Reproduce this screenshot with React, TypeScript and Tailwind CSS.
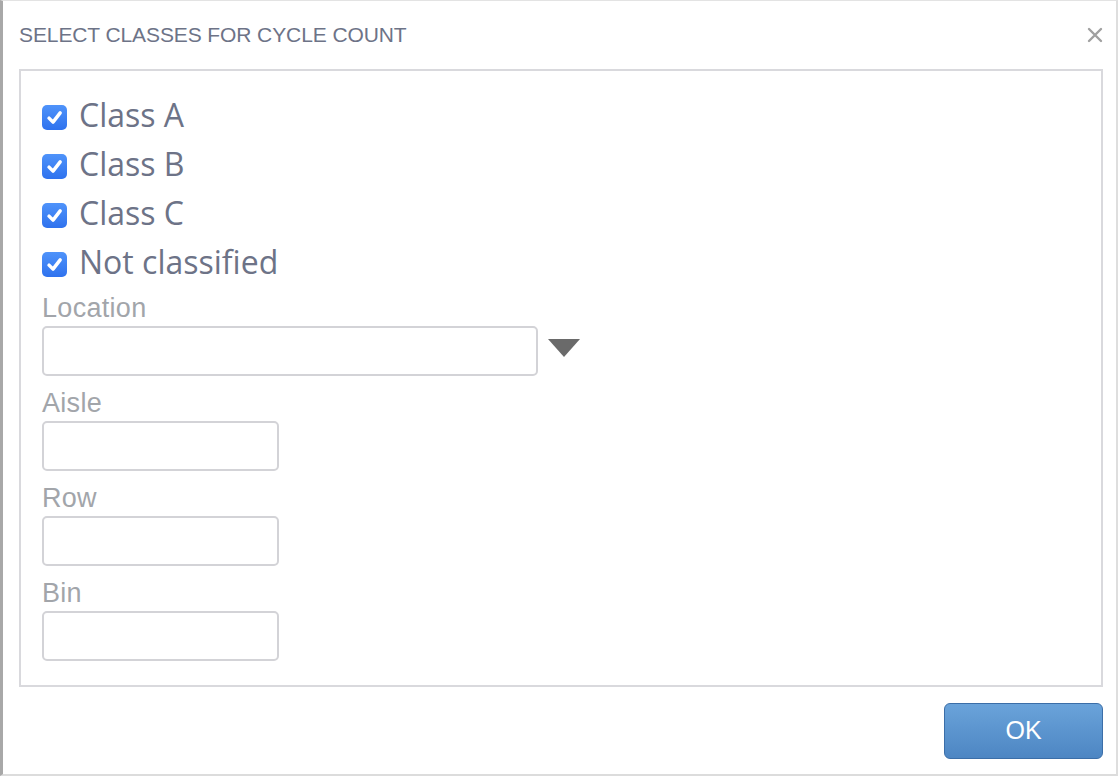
import React from "react";

const font = { fontFamily: '"Liberation Sans", Arial, sans-serif' };
const checkFont = { fontFamily: '"Open Sans", "Liberation Sans", Arial, sans-serif' };

function Check({ label }: { label: string }) {
  return (
    <div className="flex items-center h-[49px]">
      <div className="w-[25px] h-[25px] rounded-[5px] bg-gradient-to-b from-[#4f93fa] to-[#2f72ee] flex items-center justify-center shrink-0 mt-[2px]">
        <svg width="21" height="21" viewBox="0 0 20 20">
          <path d="M4.8 10.6 L8.6 14.4 L15.4 5.6" fill="none" stroke="#ffffff" strokeWidth="3.3" strokeLinecap="round" strokeLinejoin="round" />
        </svg>
      </div>
      <span style={checkFont} className="ml-[12px] -mt-[3px] text-[32px] leading-[40px] text-[#6d7387]">{label}</span>
    </div>
  );
}

function Field({ label, width, children, first }: { label: string; width: string; children?: React.ReactNode; first?: boolean }) {
  return (
    <div className={first ? "mt-[4px]" : "mt-[11px]"}>
      <div className="h-[32px] leading-[32px] text-[27px] text-[#a2a5aa] tracking-[0.3px]">{label}</div>
      <div className="mt-[2px] flex items-start">
        <div className={`${width} h-[50px] rounded-[5px] border-2 border-[#d3d3d7] bg-white`} />
        {children}
      </div>
    </div>
  );
}

export default function App() {
  return (
    <div style={font} className="w-[1118px] h-[776px] bg-white border-t border-t-[#e3e3e3] border-l-[3px] border-l-[#a8a8a8] border-r-2 border-r-[#dedede] border-b-2 border-b-[#dcdcdc] flex flex-col">
      <div className="h-[68px] pl-[16px] pr-[13px] flex items-center justify-between">
        <span className="text-[21px] text-[#6d7387] tracking-[-0.1px]">SELECT CLASSES FOR CYCLE COUNT</span>
        <svg width="16" height="16" viewBox="0 0 16 16" className="mb-[1px]">
          <path d="M2 2 L14 14 M14 2 L2 14" stroke="#a0a0a0" strokeWidth="2.4" strokeLinecap="round" />
        </svg>
      </div>
      <div className="ml-[16px] w-[1084px] border-2 border-[#d9d9dd] pl-[21px] pt-[21px] pb-[24px]">
        <Check label="Class A" />
        <Check label="Class B" />
        <Check label="Class C" />
        <Check label="Not classified" />
        <Field label="Location" width="w-[496px]" first>
          <svg width="34" height="20" viewBox="0 0 34 20" className="ml-[9px] mt-[12px]">
            <path d="M1 1 L33 1 L17 19 Z" fill="#6a6a6a" />
          </svg>
        </Field>
        <Field label="Aisle" width="w-[237px]" />
        <Field label="Row" width="w-[237px]" />
        <Field label="Bin" width="w-[237px]" />
      </div>
      <div className="ml-[16px] w-[1084px] flex justify-end mt-[16px]">
        <button className="w-[159px] h-[56px] rounded-[6px] border border-[#3b6ea8] bg-gradient-to-b from-[#6aa3da] to-[#4d86c3] text-white text-[25px] flex items-center justify-center">
          OK
        </button>
      </div>
    </div>
  );
}
